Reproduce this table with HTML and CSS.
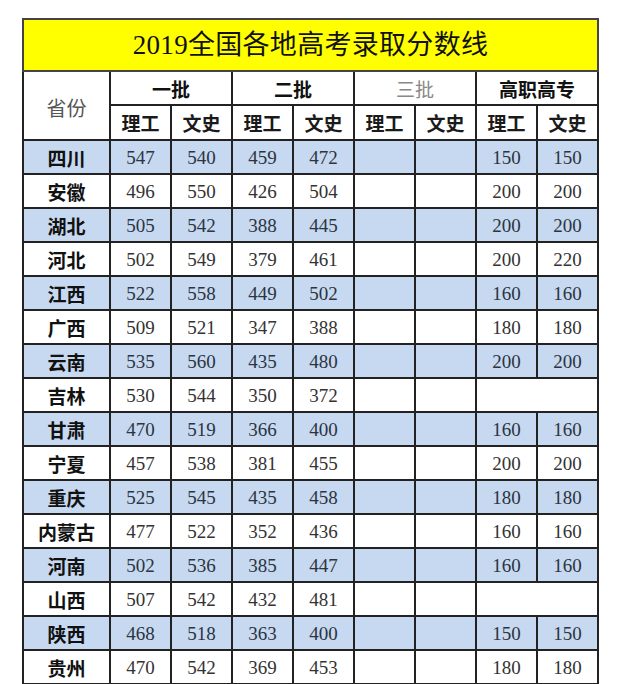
FILE: index.html
```html
<!DOCTYPE html>
<html lang="zh">
<head>
<meta charset="utf-8">
<title>2019全国各地高考录取分数线</title>
<link rel="stylesheet" href="styles.css">
</head>
<body>
<table class="score-table">
  <colgroup>
    <col class="c-prov">
    <col class="c-num"><col class="c-num"><col class="c-num"><col class="c-num">
    <col class="c-num"><col class="c-num"><col class="c-num"><col class="c-num">
  </colgroup>
  <thead>
    <tr class="title-row"><th colspan="9" class="title">2019全国各地高考录取分数线</th></tr>
    <tr class="hdr1">
      <th rowspan="2" class="prov-hdr">省份</th>
      <th colspan="2" class="batch">一批</th>
      <th colspan="2" class="batch">二批</th>
      <th colspan="2" class="batch light">三批</th>
      <th colspan="2" class="batch">高职高专</th>
    </tr>
    <tr class="hdr2">
      <th class="sub">理工</th><th class="sub">文史</th>
      <th class="sub">理工</th><th class="sub">文史</th>
      <th class="sub">理工</th><th class="sub">文史</th>
      <th class="sub">理工</th><th class="sub">文史</th>
    </tr>
  </thead>
  <tbody>
    <tr class="blue"><td class="prov">四川</td><td>547</td><td>540</td><td>459</td><td>472</td><td></td><td></td><td>150</td><td>150</td></tr>
    <tr><td class="prov">安徽</td><td>496</td><td>550</td><td>426</td><td>504</td><td></td><td></td><td>200</td><td>200</td></tr>
    <tr class="blue"><td class="prov">湖北</td><td>505</td><td>542</td><td>388</td><td>445</td><td></td><td></td><td>200</td><td>200</td></tr>
    <tr><td class="prov">河北</td><td>502</td><td>549</td><td>379</td><td>461</td><td></td><td></td><td>200</td><td>220</td></tr>
    <tr class="blue"><td class="prov">江西</td><td>522</td><td>558</td><td>449</td><td>502</td><td></td><td></td><td>160</td><td>160</td></tr>
    <tr><td class="prov">广西</td><td>509</td><td>521</td><td>347</td><td>388</td><td></td><td></td><td>180</td><td>180</td></tr>
    <tr class="blue"><td class="prov">云南</td><td>535</td><td>560</td><td>435</td><td>480</td><td></td><td></td><td>200</td><td>200</td></tr>
    <tr><td class="prov">吉林</td><td>530</td><td>544</td><td>350</td><td>372</td><td></td><td></td><td colspan="2"></td></tr>
    <tr class="blue"><td class="prov">甘肃</td><td>470</td><td>519</td><td>366</td><td>400</td><td></td><td></td><td>160</td><td>160</td></tr>
    <tr><td class="prov">宁夏</td><td>457</td><td>538</td><td>381</td><td>455</td><td></td><td></td><td>200</td><td>200</td></tr>
    <tr class="blue"><td class="prov">重庆</td><td>525</td><td>545</td><td>435</td><td>458</td><td></td><td></td><td>180</td><td>180</td></tr>
    <tr><td class="prov">内蒙古</td><td>477</td><td>522</td><td>352</td><td>436</td><td></td><td></td><td>160</td><td>160</td></tr>
    <tr class="blue"><td class="prov">河南</td><td>502</td><td>536</td><td>385</td><td>447</td><td></td><td></td><td>160</td><td>160</td></tr>
    <tr><td class="prov">山西</td><td>507</td><td>542</td><td>432</td><td>481</td><td></td><td></td><td colspan="2"></td></tr>
    <tr class="blue"><td class="prov">陕西</td><td>468</td><td>518</td><td>363</td><td>400</td><td></td><td></td><td>150</td><td>150</td></tr>
    <tr><td class="prov">贵州</td><td>470</td><td>542</td><td>369</td><td>453</td><td></td><td></td><td>180</td><td>180</td></tr>
  </tbody>
</table>
</body>
</html>
```
FILE: styles.css
```css
html, body {
  margin: 0;
  padding: 0;
  background: #ffffff;
  overflow: hidden;
}

body {
  padding: 18px 0 0 22px;
}

.score-table {
  border-collapse: collapse;
  table-layout: fixed;
  width: 575px;
  font-family: "Liberation Serif", "Noto Sans CJK SC", serif;
  color: #333;
}

.c-prov { width: 87px; }
.c-num { width: 61px; }

.score-table th,
.score-table td {
  border: 2px solid #222;
  padding: 0;
  text-align: center;
  vertical-align: middle;
  font-size: 19px;
  line-height: 1;
}

.title-row th { height: 50px; }
.hdr1 th { height: 32px; }
.hdr2 th { height: 33px; }
.score-table tbody td { height: 32px; }

.score-table .title {
  background: #ffff00;
  border-color: #444;
  font-family: "Liberation Serif", "Noto Sans CJK SC", serif;
  font-weight: 400;
  font-size: 27px;
  color: #111;
  letter-spacing: 0.3px;
}

.score-table .prov-hdr {
  font-family: "Noto Sans CJK SC", sans-serif;
  font-weight: 400;
  font-size: 20px;
  color: #555;
  padding-top: 4px;
}

.score-table .batch {
  font-family: "Noto Sans CJK SC", sans-serif;
  font-weight: 700;
  color: #111;
}

.score-table .batch.light {
  font-weight: 400;
  color: #888;
}

.score-table .sub {
  font-family: "Noto Sans CJK SC", sans-serif;
  font-weight: 700;
  color: #1a1a1a;
}

.score-table .prov {
  font-family: "Noto Sans CJK SC", sans-serif;
  font-weight: 700;
  color: #111;
}

.blue td {
  background: #c6d9f0;
}
.blue td:not(.prov) {
  color: #2c3440;
}
```
